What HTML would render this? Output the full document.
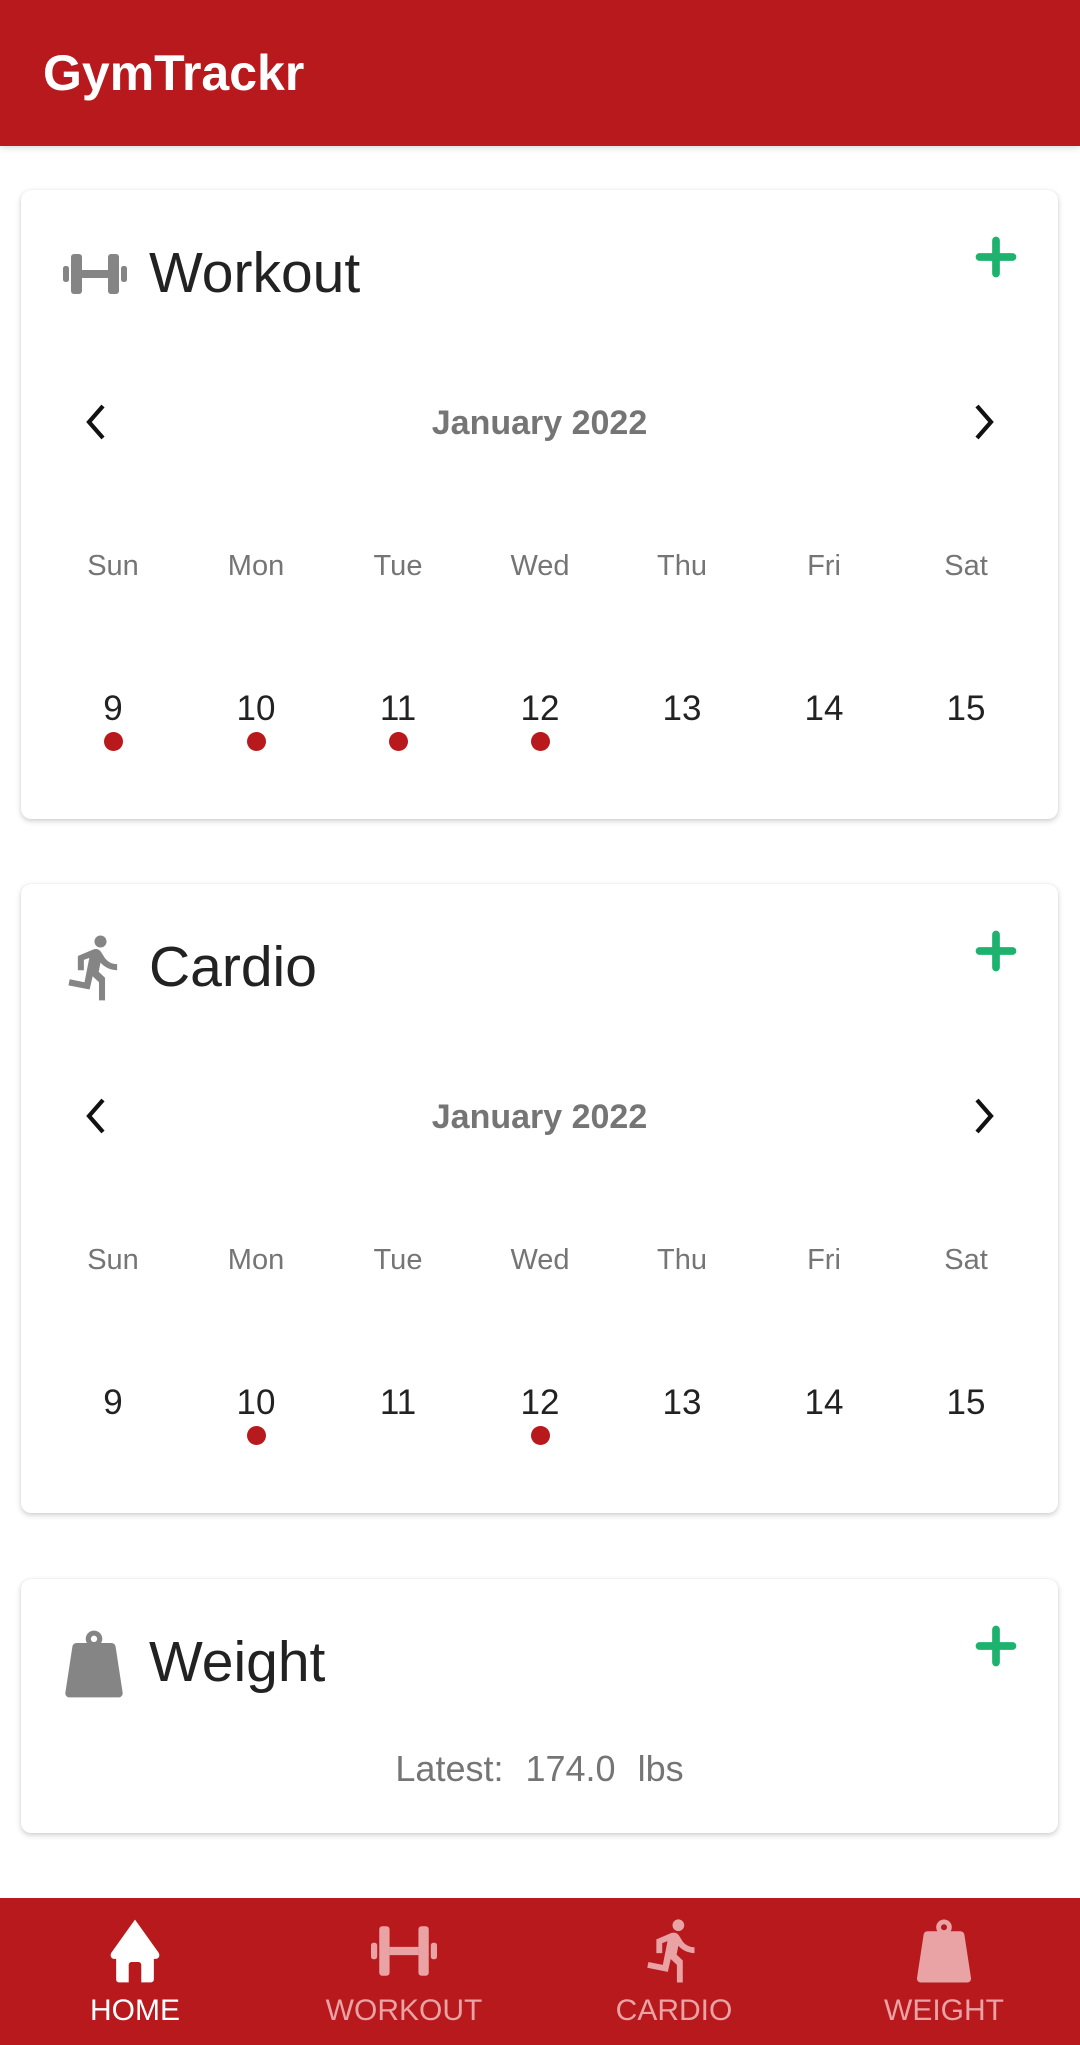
<!DOCTYPE html>
<html><head><meta charset="utf-8"><style>
*{margin:0;padding:0;box-sizing:border-box}
body{width:1080px;height:2045px;background:#fff;font-family:"Liberation Sans",sans-serif;position:relative;overflow:hidden}
.hdr{position:absolute;left:0;top:0;width:1080px;height:146px;background:#B8191C;box-shadow:0 2px 6px rgba(0,0,0,.15)}
.hdr span{position:absolute;left:43px;top:44px;font-size:50px;font-weight:bold;color:#fff}
.card{position:absolute;left:21px;width:1037px;background:#fff;border-radius:10px;box-shadow:0 2px 6px rgba(0,0,0,.2),0 0 1px rgba(0,0,0,.1)}
.ttl{position:absolute;left:128px;top:50px;font-size:57px;color:#222}
.ico{position:absolute;left:42px;top:52px;width:64px;height:64px}
.plus{position:absolute;left:953px;top:45px;width:44px;height:44px}
.t{position:absolute;text-align:center;width:142px;margin-left:-71px}
.mon{position:absolute;left:0;width:1037px;text-align:center;font-weight:bold;font-size:34px;color:#757575}
.wd{font-size:29px;color:#757575}
.dt{font-size:35px;color:#222}
.dot{position:absolute;width:19px;height:19px;border-radius:50%;background:#B8191C;margin-left:-9.5px}
.nav{position:absolute;left:0;top:1898px;width:1080px;height:147px;background:#B8191C}
.ni{position:absolute;top:20px;width:270px;margin-left:-135px;text-align:center}
.ni svg{display:block;margin:0 auto;width:66px;height:66px}
.ni div{font-size:30px;margin-top:10px;color:#E9A3A5}
</style></head><body>
<div class="hdr"><span>GymTrackr</span></div>

<div class="card" style="top:190px;height:629px">
 <svg class="ico" viewBox="0 -6 32 32"><g fill="#858585"><rect x="0" y="6" width="3" height="8" rx="1.2"/><rect x="4" y="0" width="5.5" height="20" rx="1.5"/><rect x="9" y="8" width="14" height="4"/><rect x="22.5" y="0" width="5.5" height="20" rx="1.5"/><rect x="29" y="6" width="3" height="8" rx="1.2"/></g></svg>
 <div class="ttl">Workout</div>
 <svg class="plus" viewBox="0 0 24 24"><path d="M12 3v18M3 12h18" stroke="#1DB36F" stroke-width="4.2" stroke-linecap="round"/></svg>
 <svg style="position:absolute;left:60px;top:212px" width="30" height="40" viewBox="0 0 30 40"><path d="M22 4L8 20l14 16" fill="none" stroke="#111" stroke-width="4.2"/></svg>
 <svg style="position:absolute;left:948px;top:212px" width="30" height="40" viewBox="0 0 30 40"><path d="M8 4l14 16L8 36" fill="none" stroke="#111" stroke-width="4.2"/></svg>
 <div class="mon" style="top:214px">January 2022</div>
 <div class="t wd" style="left:92px;top:360px">Sun</div><div class="t wd" style="left:235px;top:360px">Mon</div><div class="t wd" style="left:377px;top:360px">Tue</div><div class="t wd" style="left:519px;top:360px">Wed</div><div class="t wd" style="left:661px;top:360px">Thu</div><div class="t wd" style="left:803px;top:360px">Fri</div><div class="t wd" style="left:945px;top:360px">Sat</div>
 <div class="t dt" style="left:92px;top:499px">9</div><div class="t dt" style="left:235px;top:499px">10</div><div class="t dt" style="left:377px;top:499px">11</div><div class="t dt" style="left:519px;top:499px">12</div><div class="t dt" style="left:661px;top:499px">13</div><div class="t dt" style="left:803px;top:499px">14</div><div class="t dt" style="left:945px;top:499px">15</div>
 <div class="dot" style="left:92px;top:542px"></div><div class="dot" style="left:235px;top:542px"></div><div class="dot" style="left:377px;top:542px"></div><div class="dot" style="left:519px;top:542px"></div>
</div>

<div class="card" style="top:884px;height:629px">
 <svg class="ico" style="left:44px;top:50px;width:62px;height:68px" viewBox="3.5 1 17 22.5"><path fill="#858585" d="M13.49 5.48c1.1 0 2-.9 2-2s-.9-2-2-2-2 .9-2 2 .9 2 2 2zm-3.6 13.9l1-4.4 2.1 2v6h2v-7.5l-2.1-2 .6-3c1.3 1.5 3.3 2.5 5.5 2.5v-2c-1.9 0-3.5-1-4.3-2.4l-1-1.6c-.4-.6-1-1-1.7-1-.3 0-.5.1-.8.1l-5.2 2.2v4.7h2v-3.4l1.8-.7-1.6 8.1-4.9-1-.4 2 7 1.4z"/></svg>
 <div class="ttl">Cardio</div>
 <svg class="plus" viewBox="0 0 24 24"><path d="M12 3v18M3 12h18" stroke="#1DB36F" stroke-width="4.2" stroke-linecap="round"/></svg>
 <svg style="position:absolute;left:60px;top:212px" width="30" height="40" viewBox="0 0 30 40"><path d="M22 4L8 20l14 16" fill="none" stroke="#111" stroke-width="4.2"/></svg>
 <svg style="position:absolute;left:948px;top:212px" width="30" height="40" viewBox="0 0 30 40"><path d="M8 4l14 16L8 36" fill="none" stroke="#111" stroke-width="4.2"/></svg>
 <div class="mon" style="top:214px">January 2022</div>
 <div class="t wd" style="left:92px;top:360px">Sun</div><div class="t wd" style="left:235px;top:360px">Mon</div><div class="t wd" style="left:377px;top:360px">Tue</div><div class="t wd" style="left:519px;top:360px">Wed</div><div class="t wd" style="left:661px;top:360px">Thu</div><div class="t wd" style="left:803px;top:360px">Fri</div><div class="t wd" style="left:945px;top:360px">Sat</div>
 <div class="t dt" style="left:92px;top:499px">9</div><div class="t dt" style="left:235px;top:499px">10</div><div class="t dt" style="left:377px;top:499px">11</div><div class="t dt" style="left:519px;top:499px">12</div><div class="t dt" style="left:661px;top:499px">13</div><div class="t dt" style="left:803px;top:499px">14</div><div class="t dt" style="left:945px;top:499px">15</div>
 <div class="dot" style="left:235px;top:542px"></div><div class="dot" style="left:519px;top:542px"></div>
</div>

<div class="card" style="top:1579px;height:254px">
 <svg class="ico" style="left:40px;top:50px;width:66px;height:70px" viewBox="2.5 1 19 22"><path fill="#858585" d="M12 1.5a2.6 2.6 0 0 0-2.6 2.6c0 .5.1.9.4 1.3H6.6c-.8 0-1.3.5-1.4 1.2L3 21c-.1.9.5 1.5 1.3 1.5h15.4c.8 0 1.4-.6 1.3-1.5L18.8 6.6c-.1-.7-.6-1.2-1.4-1.2h-3.2c.3-.4.4-.8.4-1.3A2.6 2.6 0 0 0 12 1.5zm0 1.6a1 1 0 1 1 0 2 1 1 0 0 1 0-2z"/></svg>
 <div class="ttl">Weight</div>
 <svg class="plus" viewBox="0 0 24 24"><path d="M12 3v18M3 12h18" stroke="#1DB36F" stroke-width="4.2" stroke-linecap="round"/></svg>
 <div style="position:absolute;left:0;width:1037px;top:169px;text-align:center;font-size:36px;color:#757575;word-spacing:12px">Latest: 174.0 lbs</div>
</div>

<div class="nav">
 <div class="ni" style="left:135px"><svg viewBox="3.5 1.5 17 21"><path fill="#fff" d="M12 2L4.5 12.5c-.6 1 0 2 .8 2H6V21c0 .6.4 1 1 1h3v-5.5c0-.6.4-1 1-1h2c.6 0 1 .4 1 1V22h3c.6 0 1-.4 1-1v-6.5h.7c.8 0 1.4-1 .8-2z"/></svg><div style="color:#fff">HOME</div></div>
 <div class="ni" style="left:404px"><svg viewBox="0 -4 32 32"><g fill="#E9A3A5"><rect x="0" y="8" width="3" height="8" rx="1.2"/><rect x="4" y="0" width="5" height="24" rx="1.5"/><rect x="9" y="10" width="14" height="4"/><rect x="23" y="0" width="5" height="24" rx="1.5"/><rect x="29" y="8" width="3" height="8" rx="1.2"/></g></svg><div>WORKOUT</div></div>
 <div class="ni" style="left:674px"><svg viewBox="3.5 1 17 22.5"><path fill="#E9A3A5" d="M13.49 5.48c1.1 0 2-.9 2-2s-.9-2-2-2-2 .9-2 2 .9 2 2 2zm-3.6 13.9l1-4.4 2.1 2v6h2v-7.5l-2.1-2 .6-3c1.3 1.5 3.3 2.5 5.5 2.5v-2c-1.9 0-3.5-1-4.3-2.4l-1-1.6c-.4-.6-1-1-1.7-1-.3 0-.5.1-.8.1l-5.2 2.2v4.7h2v-3.4l1.8-.7-1.6 8.1-4.9-1-.4 2 7 1.4z"/></svg><div>CARDIO</div></div>
 <div class="ni" style="left:944px"><svg viewBox="2.5 1 19 22"><path fill="#E9A3A5" d="M12 1.5a2.6 2.6 0 0 0-2.6 2.6c0 .5.1.9.4 1.3H6.6c-.8 0-1.3.5-1.4 1.2L3 21c-.1.9.5 1.5 1.3 1.5h15.4c.8 0 1.4-.6 1.3-1.5L18.8 6.6c-.1-.7-.6-1.2-1.4-1.2h-3.2c.3-.4.4-.8.4-1.3A2.6 2.6 0 0 0 12 1.5zm0 1.6a1 1 0 1 1 0 2 1 1 0 0 1 0-2z"/></svg><div>WEIGHT</div></div>
</div>
</body></html>
